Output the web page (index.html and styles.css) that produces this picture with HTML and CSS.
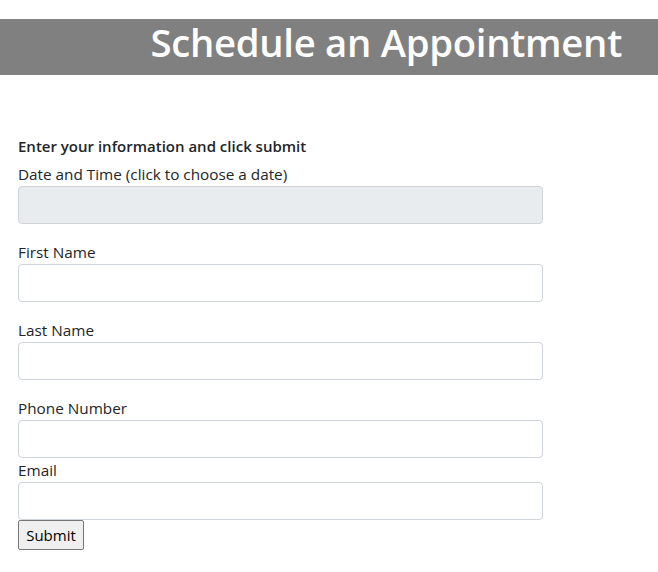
FILE: index.html
```html
<!DOCTYPE html>
<html lang="en">
<head>
<meta charset="utf-8">
<title>Schedule an Appointment</title>
<link rel="stylesheet" href="styles.css">
</head>
<body>
<header class="banner">
  <h1 class="banner-title">Schedule an Appointment</h1>
</header>
<main class="content">
  <form class="appt-form">
    <p class="intro">Enter your information and click submit</p>
    <div class="field">
      <label class="field-label" for="dt">Date and Time (click to choose a date)</label>
      <input class="field-input field-input--readonly" id="dt" type="text" readonly>
    </div>
    <div class="field">
      <label class="field-label" for="fn">First Name</label>
      <input class="field-input" id="fn" type="text">
    </div>
    <div class="field">
      <label class="field-label" for="ln">Last Name</label>
      <input class="field-input" id="ln" type="text">
    </div>
    <div class="field field--tight">
      <label class="field-label" for="ph">Phone Number</label>
      <input class="field-input" id="ph" type="text">
    </div>
    <div class="field field--tight">
      <label class="field-label" for="em">Email</label>
      <input class="field-input" id="em" type="text">
    </div>
    <button class="submit-btn" type="submit">Submit</button>
  </form>
</main>
</body>
</html>
```
FILE: styles.css
```css
html, body {
  margin: 0;
  padding: 0;
  background: #ffffff;
}
body {
  font-family: "Open Sans", "Noto Sans", sans-serif;
  font-size: 15px;
  line-height: 24px;
  color: #212529;
}
.banner {
  box-sizing: border-box;
  margin-top: 19px;
  height: 56px;
  background: #808080;
  display: flex;
  align-items: flex-start;
  justify-content: flex-end;
  padding: 3px 36px 0 0;
}
.banner-title {
  margin: 0;
  font-size: 38.3px;
  line-height: 40px;
  font-weight: 600;
  color: #ffffff;
  letter-spacing: -0.3px;
}
.content {
  padding: 59px 0 0 18px;
}
.appt-form {
  width: 525px;
  display: flex;
  flex-direction: column;
}
.intro {
  margin: 0 0 4px 0;
  font-weight: 600;
  font-size: 15px;
  line-height: 24px;
}
.field {
  display: flex;
  flex-direction: column;
  margin-bottom: 16px;
}
.field--tight {
  margin-bottom: 0;
}
.field-label {
  font-size: 15.3px;
  line-height: 24px;
}
.field-input {
  box-sizing: border-box;
  height: 38px;
  width: 100%;
  margin: 0;
  border: 1px solid #ced4da;
  border-radius: 4px;
  background: #ffffff;
  font: inherit;
  padding: 6px 12px;
}
.field-input--readonly {
  background: #e9ecef;
}
.submit-btn {
  align-self: flex-start;
  box-sizing: border-box;
  height: 30px;
  width: 66px;
  padding: 0;
  margin: 0;
  font-family: inherit;
  font-size: 15px;
  color: #000000;
  background: #efefef;
  border: 1px solid #767676;
  border-radius: 2px;
}
```
